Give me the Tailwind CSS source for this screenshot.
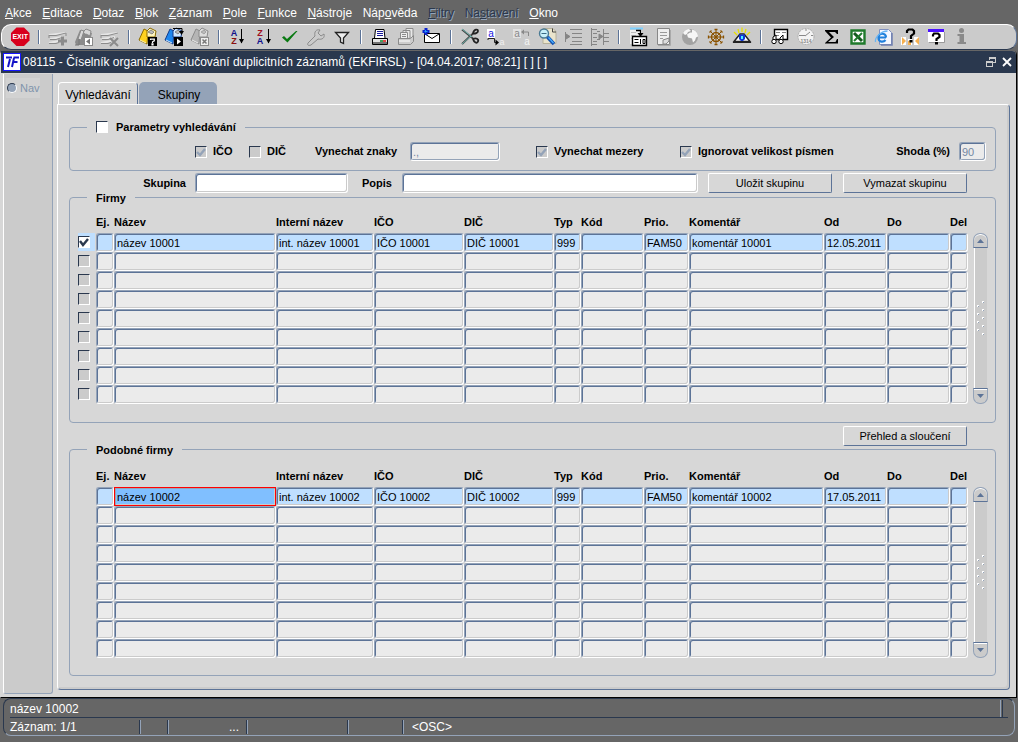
<!DOCTYPE html>
<html lang="cs">
<head>
<meta charset="utf-8">
<title>08115 - Číselník organizací</title>
<script src="https://cdn.jsdelivr.net/npm/@tailwindcss/browser@4"></script>
</head>
<body class="flex min-h-screen flex-col bg-[#666666] font-['Liberation_Sans',Arial,sans-serif] text-[11px] text-black">

<nav class="flex h-6 max-w-[558px] items-center justify-between pl-[5px] pt-[2px] text-[12px] text-white" aria-label="Hlavní nabídka">
  <a href="#"><u>A</u>kce</a>
  <a href="#"><u>E</u>ditace</a>
  <a href="#"><u>D</u>otaz</a>
  <a href="#"><u>B</u>lok</a>
  <a href="#"><u>Z</u>áznam</a>
  <a href="#"><u>P</u>ole</a>
  <a href="#"><u>F</u>unkce</a>
  <a href="#"><u>N</u>ástroje</a>
  <a href="#">Náp<u>o</u>věda</a>
  <a href="#" aria-disabled="true" class="text-[#2a384e] [text-shadow:1px_1px_0_#94a3b8]"><u>F</u>iltry</a>
  <a href="#" aria-disabled="true" class="text-[#2a384e] [text-shadow:1px_1px_0_#94a3b8]">Na<u>s</u>tavení</a>
  <a href="#"><u>O</u>kno</a>
</nav>

<div role="toolbar" aria-label="Nástroje" class="mx-px flex h-[26px] items-center rounded-[10px] border-b border-l border-r border-t border-b-[#2a384e] border-l-white border-r-[#5c7397] border-t-white bg-[#cbcbcb] pl-[5px] [&>button]:flex [&>button]:w-[26px] [&>button]:justify-center [&>i]:mx-[5px] [&>i]:h-[14px] [&>i]:w-[2px] [&>i]:border-l [&>i]:border-l-[#5c7397] [&>i]:bg-white [&_svg]:size-6">
  <button aria-label="Konec"><svg viewBox="0 0 24 24"><path d="M8.500 2.500h7.500L21.500 8v7.500L16 21H8.500L3 15.500V8Z" fill="#d8001d"/><text x="12.200" y="14.200" font-size="7" font-weight="bold" fill="#fff" text-anchor="middle">EXIT</text></svg></button>
  <i></i>
  <button aria-label="Vložit záznam"><svg viewBox="0 0 24 24" fill="none"><path d="M3 10 20 8M4 14l13-2M3 18l10-2" stroke="#e6e6e6" stroke-width="2"/><path d="M3 10.500h7L20 8M4 14.500h6l6-2M3 18.500h7l3-1M3 10v3M20 8v3" stroke="#8b8b8b"/><path d="M16.500 11.500v9M12 16h9" stroke="#8b8b8b" stroke-width="3"/></svg></button>
  <button aria-label="Duplikovat"><svg viewBox="0 0 24 24"><path d="m3 17 5-12 12 3-3 12H4Z" fill="#8b8b8b"/><path d="m6 14 3-9 3 1-3 9ZM11 7l3-3 5 2-1 5-4-2" fill="#d8d8d8" stroke="#8b8b8b"/><path d="M3 20h4v-6" stroke="#777" fill="none"/><rect x="12.500" y="12.500" width="8" height="8" fill="#fff" stroke="#8b8b8b"/><path d="M18 13.500v6l-4-3Z" fill="#777"/></svg></button>
  <button aria-label="Smazat záznam"><svg viewBox="0 0 24 24" fill="none"><path d="M3 10 20 8M4 14l13-2M3 18l10-2" stroke="#e6e6e6" stroke-width="2"/><path d="M3 10.500h7L20 8M4 14.500h6l6-2M3 18.500h7l3-1M3 10v3" stroke="#8b8b8b"/><path d="m12 13 8 8M20 13l-8 8" stroke="#8b8b8b" stroke-width="2"/></svg></button>
  <i></i>
  <button aria-label="Zadat dotaz"><svg viewBox="0 0 24 24"><path d="m3 15 5-11 4 2-1 13Z" fill="#ffd21e" stroke="#8a6a00"/><path d="m11 6 3-3 6 3-1 6h-8Z" fill="#fff6c0" stroke="#8a6a00"/><path d="m12 7 3-2 3 2-2 2Z" fill="#bbb" stroke="#555" stroke-width=".6"/><path d="m4 15 6 3" stroke="#fff6c0"/><rect x="12" y="12" width="9" height="9"/><path d="M14.500 15v-.8h3.800v1.600l-1.800 1V18M16 18.800h1v1.200h-1Z" fill="none" stroke="#fff" stroke-width="1.200"/></svg></button>
  <button aria-label="Provést dotaz"><svg viewBox="0 0 24 24"><path d="m3 15 5-11 4 2-1 13Z" fill="#1d86ee" stroke="#123a8a"/><path d="m11 6 3-3 6 3-1 6h-8Z" fill="#cfe8ff" stroke="#123a8a"/><path d="m13 7 3-2 2 2-2 2Z" fill="#bbb" stroke="#555" stroke-width=".6"/><path d="M11 3.500h9V7" stroke="#000" fill="none"/><path d="M17 6h5l-2.500 4Z"/><path d="m4 15 6 3" stroke="#cfe8ff"/><rect x="12" y="12" width="9" height="9"/><path d="M15 13.500v6l4-3Z" fill="#fff"/></svg></button>
  <button aria-label="Zrušit dotaz"><svg viewBox="0 0 24 24"><path d="m3 15 5-11 4 2-1 13Z" fill="#b5b5b5" stroke="#8b8b8b"/><path d="m11 6 3-3 6 3-1 6h-8Z" fill="#ddd" stroke="#8b8b8b"/><path d="m13 7 3-2 2 2-2 2Z" fill="#bbb" stroke="#888" stroke-width=".6"/><path d="m4 15 6 3" stroke="#eee"/><rect x="12.500" y="12.500" width="8" height="8" fill="#eee" stroke="#8b8b8b"/><path d="m14.500 14.500 4 4M18.500 14.500l-4 4" stroke="#777" stroke-width="1.500"/></svg></button>
  <i></i>
  <button aria-label="Seřadit vzestupně"><svg viewBox="0 0 24 24"><text x="8" y="11" font-size="9" font-weight="bold" fill="#10108a" text-anchor="middle">A</text><text x="8" y="19" font-size="9" font-weight="bold" fill="#8a1010" text-anchor="middle">Z</text><path d="M15.500 4v14" stroke="#000"/><path d="M13 14h5l-2.500 4.500Z"/></svg></button>
  <button aria-label="Seřadit sestupně"><svg viewBox="0 0 24 24"><text x="8" y="11" font-size="9" font-weight="bold" fill="#a01020" text-anchor="middle">Z</text><text x="8" y="19" font-size="9" font-weight="bold" fill="#10108a" text-anchor="middle">A</text><path d="M16.500 4v14" stroke="#000"/><path d="M14 14h5l-2.500 4.500Z"/></svg></button>
  <button aria-label="Potvrdit"><svg viewBox="0 0 24 24"><path d="M4 12.500 6 11l3 3 9-8h1.500L9.500 17.500Z" fill="#0a7a12"/></svg></button>
  <button aria-label="Nastavit"><svg viewBox="0 0 24 24" fill="none"><path d="m4 18 7-7c-1-4 1-7 5-6l-2 3 3 3 3-2c1 4-2 6-6 5l-7 6c-3 1-4 0-3-2Z" stroke="#8b8b8b"/></svg></button>
  <button aria-label="Filtr"><svg viewBox="0 0 24 24"><path d="M5.500 7.500h13l-5 5.500v5.500l-3-1.500v-4Z" fill="#eee" stroke="#222" stroke-width="1.300"/></svg></button>
  <i></i>
  <button aria-label="Tisk"><svg viewBox="0 0 24 24"><path d="M6.500 13 7.500 4.500h8.500l1 8.500" fill="#fff" stroke="#000"/><path d="M9 6.500h6M9 8.500h6M9 10.500h6" stroke="#1a1a9a"/><path d="M4.500 13.500h15v6h-15Z" fill="#e4e4e4" stroke="#000"/><path d="M5 18h14.500" stroke="#000"/><path d="M12 16h3" stroke="#0a8a2a" stroke-width="1.500"/><path d="M15 16h3" stroke="#e01010" stroke-width="1.500"/></svg></button>
  <button aria-label="Tisk kopií"><svg viewBox="0 0 24 24"><path d="M12 9V3.500h7V13M9 11V5.500h7V13" fill="#e8e8e8" stroke="#8b8b8b"/><path d="M6.500 13V7.500h7V13M8 9.500h4M8 11.500h4" fill="#eee" stroke="#8b8b8b"/><path d="M4.500 13.500h12l3-3v6l-3 3h-12Z" fill="#ccc" stroke="#8b8b8b"/><path d="M5 16h11" stroke="#fff"/></svg></button>
  <button aria-label="Odeslat poštou"><svg viewBox="0 0 24 24"><path d="M4.500 8.500h15v9h-15Z" fill="#fff" stroke="#000"/><path d="m5 9 7 4.500L19 9" fill="none" stroke="#000"/><path d="M6 3v7M2.500 6.500h7" stroke="#0a22d0" stroke-width="3"/><path d="M5.500 5v2.500M4.500 6.500h3" stroke="#22a0ff"/></svg></button>
  <i></i>
  <button aria-label="Vyjmout"><svg viewBox="0 0 24 24" fill="none"><path d="m4 4.500 11 9M4 19 15 8.500" stroke="#444" stroke-width="1.800"/><path d="m4 4 10 8M4 19l9-8" stroke="#7ad0c8" stroke-width=".8"/><path d="M15 8.500c1-5 5-4.500 5-2.500s-3 3-5 2.500ZM15 14c3-1.500 6 0 5 2.500s-4 1-5-2.500Z" stroke="#222" stroke-width="1.800"/></svg></button>
  <button aria-label="Kopírovat"><svg viewBox="0 0 24 24"><rect x="3" y="4" width="8" height="9" fill="#fff"/><text x="7" y="12" font-size="10" fill="#1414e0" text-anchor="middle">a</text><text x="18" y="20" font-size="9" fill="#f0f0f0" text-anchor="middle">a</text><path d="M4 15v-1.500h6.500v4H13" fill="none" stroke="#222"/><path d="m11.500 14.500 3.500 3-3.500 3Z"/></svg></button>
  <button aria-label="Vložit"><svg viewBox="0 0 24 24"><rect x="3" y="4" width="8" height="9" fill="#e2e2e2"/><text x="7" y="12" font-size="10" fill="#888" text-anchor="middle">a</text><text x="17" y="20" font-size="10" fill="#f4f4f4" text-anchor="middle">a</text><path d="M13 7h5.500v4" fill="none" stroke="#888"/><path d="M14 4.500 11 7l3 2.500Z" fill="#888"/></svg></button>
  <button aria-label="Hledat"><svg viewBox="0 0 24 24"><path d="M7 3.500h10l3 3v12H7Z" fill="#e9e4cc" stroke="#b5b09a"/><path d="M16.500 3.500V7H20" stroke="#444" fill="none"/><circle cx="8" cy="8.500" r="4.500" fill="#c8f0fa" stroke="#4a7a94" stroke-width="1.400"/><path d="M5.500 8.500h5" stroke="#3a6a84"/><path d="m11.500 12 6.500 7" stroke="#1552b0" stroke-width="3.500"/><path d="m12.500 12.500 5 5.500" stroke="#4ab0ff" stroke-width="1.200"/></svg></button>
  <button aria-label="Odsadit"><svg viewBox="0 0 24 24" stroke="#858585" fill="none"><path d="M8 4.500h12M10 8.500h10M10 12.500h10M10 16.500h10M8 19.500h12M3.500 7v10"/><path d="m4 9 4 2.500L4 14Z" fill="#858585"/></svg></button>
  <button aria-label="Rozdělit"><svg viewBox="0 0 24 24" stroke="#858585" fill="none"><path d="M3 4.500h6M5 8.500h4M5 12.500h4M5 16.500h4M3 19.500h6M3.500 3v18M15.500 4v16M16 8.500h5M16 12.500h5M16 16.500h5M9 6.500h3M9 14.500h3"/><path d="m11 9 4 2.500-4 2.500Z" fill="#858585"/></svg></button>
  <i></i>
  <button aria-label="Detail"><svg viewBox="0 0 24 24"><path d="M4 3.500h13" stroke="#7cd0ff" stroke-width="2"/><path d="M4 5h12v14H4Z" fill="#eee"/><path d="M5 7.500h5M5 10.500h5M5 13.500h3" stroke="#bbb"/><path d="M10 5.500h4.500V9" stroke="#000" fill="none" stroke-width="1.300"/><path d="M11.500 8h6l-3 4Z"/><path d="M6.500 11.500h14v9h-14Z" fill="#fff" stroke="#000" stroke-width="1.400"/><path d="M8.500 14.500h4M8.500 17.500h4M14.500 14v5M17 14.500h2v4h-2Z" stroke="#000" fill="none"/></svg></button>
  <button aria-label="Poznámka"><svg viewBox="0 0 24 24"><path d="M5.500 3.500h12v16h-12Z" fill="#eee" stroke="#888"/><path d="M18.500 5v15.500H6" stroke="#aaa" fill="none"/><path d="M8 7.500h7M8 10.500h7M8 13.500h3" stroke="#999"/><path d="M11 19v-4l6-2v3l-3 3Z" fill="#ddd" stroke="#888"/></svg></button>
  <button aria-label="Web"><svg viewBox="0 0 24 24"><circle cx="12" cy="12" r="8" fill="#a2a2a2"/><path d="M5 8c2-3 4-4 6-4l2 2-3 1-1 2-2 1ZM14 4.500c4 1 6 4 6 7l-2 1-1 3-2 2-1-4-4-1-1-3 3-2 2 0Z" fill="#f6f6f6"/></svg></button>
  <button aria-label="Kormidlo"><svg viewBox="0 0 24 24" fill="none" stroke="#8a5200"><circle cx="12" cy="12" r="4.500" stroke-width="1.500"/><circle cx="12" cy="12" r="1.200"/><path d="M12 4v16M4 12h16M7 7l10 10M17 7 7 17"/><path d="M10.500 4.500h3M10.500 19.500h3M4.500 10.500v3M19.500 10.500v3M5.500 7.500l2-2M16.500 5.500l2 2M5.500 16.500l2 2M16.500 18.500l2-2" stroke-width="1.300"/></svg></button>
  <button aria-label="Náhled"><svg viewBox="0 0 24 24"><path d="m4 7 3 3M8 4l1 4M12 2.500V7M16 4l-1 4M20 7l-3 3" stroke="#e8e000" stroke-width="1.300"/><path d="M4 16.500 10 9h4l6 7.500Z" fill="#fff" stroke="#222" stroke-width="1.500"/><path d="M3 17.500h18" stroke="#222"/><path d="M9 9.500h6v4.500l-2 2h-2l-2-2Z" fill="#1038d8"/><path d="M11 11h2v3h-2Z" fill="#4cf0ff"/></svg></button>
  <i></i>
  <button aria-label="Zobrazit seznam"><svg viewBox="0 0 24 24"><path d="M6.500 4.500h13v10h-13Z" fill="#fff" stroke="#000" stroke-width="1.400"/><path d="M8 7.500h4M8 10.500h3M14 7.500h4" stroke="#888"/><path d="M5 15v-3l3-2v4M12 15v-2l3-3v4" stroke="#000" fill="#fff"/><circle cx="6" cy="16.500" r="2.200" fill="#fff" stroke="#000"/><circle cx="13" cy="16.500" r="2.200" fill="#fff" stroke="#000"/></svg></button>
  <button aria-label="Čas"><svg viewBox="0 0 24 24"><circle cx="12" cy="11.500" r="8" fill="#f4f4f4" stroke="#aaa" stroke-dasharray="2 1"/><path d="m11 11 5-4M5 10.500h6M17 10.500h2M12 4v2" stroke="#888" fill="none"/><text x="12" y="17.500" font-size="5" font-weight="bold" fill="#888" text-anchor="middle">1314</text></svg></button>
  <button aria-label="Součet"><svg viewBox="0 0 24 24"><path d="M5 5h13v4h-1l-2-2H9l5 5-6 5h7.500l1.500-3h1v4.500H5V18l6-5.500L5 6Z"/></svg></button>
  <button aria-label="Excel"><svg viewBox="0 0 24 24"><path d="M5.500 5.500h13v13h-13Z" fill="#fff" stroke="#1f7a2c" stroke-width="2.400"/><path d="m8 8 8 8" stroke="#14591f" stroke-width="3"/><path d="m16 8-8 8" stroke="#1f7a2c" stroke-width="2"/></svg></button>
  <button aria-label="Prohlížeč"><svg viewBox="0 0 24 24"><path d="M7.500 4.500h9l3 3v12h-12Z" fill="#f4f7ff" stroke="#8090c0"/><path d="M20 8v12H9" fill="none" stroke="#7080b0" stroke-width="1.500"/><path d="M14 12.500H6.500M14 12.500c0-5-7.500-5-7.500 0s5 5 7 2.500" fill="none" stroke="#1f80dc" stroke-width="2.200"/><path d="M3.500 17c-1-5 6-11 12-11" fill="none" stroke="#68b4f4" stroke-width="1.300"/></svg></button>
  <button aria-label="Nápověda kontextu"><svg viewBox="0 0 24 24"><path d="M3 12h5v8H3ZM10 14h4v6h-4ZM16 12h5v8h-5Z" fill="#fff"/><path d="m4 12 4 4-4 4ZM10 16l3-1v5h-3ZM21 12l-4 4 4 4Z" fill="#f6b050"/><path d="M9 8V6l1.500-1.500h4L16 6v2.500L13 11v3" fill="none" stroke="#000" stroke-width="2.200"/><path d="M11.500 15h3v2.500h-3Z"/></svg></button>
  <button aria-label="Nápověda"><svg viewBox="0 0 24 24"><path d="M4 5h16v12H4Z" fill="#fff"/><path d="M4 5.500h16" stroke="#4a10ff" stroke-width="3"/><path d="M20.500 7v10.500H5" fill="none" stroke="#999"/><path d="M9 11.500V10l1-1.500h4l1.500 1.500v2L12.500 14v2" fill="none" stroke="#000" stroke-width="2.200"/><path d="M11 17h3v2.500h-3Z"/></svg></button>
  <button aria-label="Informace"><svg viewBox="0 0 24 24" fill="#8a8a8a"><circle cx="11.500" cy="5.500" r="2.500"/><path d="M7.500 9H14v8h2v2H7.500v-2h2v-6h-2Z"/></svg></button>
</div>

<main class="mr-px mt-px flex flex-1 flex-col rounded-t-[4px] border-b border-l border-r border-b-black border-l-[#d7d7d7] border-r-black bg-[#d7d7d7]">
  <header class="flex h-[22px] items-center rounded-tr-[4px] bg-[#2a384e] pl-[2px] pr-1 text-[12px] text-white">
    <svg class="mr-[2px] h-[18px] w-[18px]" viewBox="0 0 18 18" aria-hidden="true"><rect x=".5" y=".5" width="17" height="17" fill="#fff" stroke="#1414ff"/><path d="M3 4.500h6M7 6 5 14M11 5 9 14M10.500 4.500H16M10 9h4.500" stroke="#1414c8" stroke-width="2" fill="none"/></svg>
    <h1>08115 - Číselník organizací - slučování duplicitních záznamů (EKFIRSL) - [04.04.2017; 08:21] [ ] [ ]</h1>
    <button class="ml-auto mr-[6px]" aria-label="Obnovit"><svg class="h-[10px] w-[10px]" viewBox="0 0 10 10" fill="none" stroke="#ccc" shape-rendering="crispEdges"><path d="M3.500 3V.5h6v5H7M3 1.500h6"/><path d="M.5 4.500h6v5h-6ZM.5 5.500h6"/></svg></button>
    <button aria-label="Zavřít"><svg class="h-[10px] w-[10px]" viewBox="0 0 10 10" stroke="#fff" stroke-width="1.800"><path d="m1 1 8 8M9 1 1 9"/></svg></button>
  </header>

  <div class="flex flex-1 pb-[7px] pr-[6px]">
    <aside class="mb-[-4px] ml-[2px] mt-px w-[50px] shrink-0 rounded-b-[3px] border-b border-l border-r border-b-[#94a3b8] border-l-white border-r-[#94a3b8] bg-[#cbcbcb] pl-[2px] pt-1">
      <label class="flex h-[20px] w-[34px] items-center gap-[3px] bg-[#d2d2d2] pl-px text-[#8094ac]">
        <input type="radio" name="nav" disabled class="size-[10px] appearance-none rounded-full border border-b-white border-l-[#2a384e] border-r-white border-t-[#2a384e] bg-[#94a3b8]">Nav
      </label>
    </aside>

    <div class="ml-1 flex flex-1 flex-col pt-[9px]">
      <div role="tablist" class="flex h-[22px] gap-px pl-px text-[12px]">
        <button role="tab" aria-selected="true" class="w-[80px] rounded-t-[4px] border-l border-r border-t border-l-white border-r-[#5c7397] border-t-white bg-[#d7d7d7] pt-[2px]">Vyhledávání</button>
        <button role="tab" aria-selected="false" class="w-[78px] rounded-t-[5px] bg-[#94a3b8] pl-[2px] pt-[3px]">Skupiny</button>
      </div>

      <div role="tabpanel" class="flex-1 rounded-b-[4px] rounded-tr-[4px] border border-b-[#5c7397] border-l-white border-r-[#5c7397] border-t-white pb-[12px] pl-[11px] pr-[13px] pt-[14px] shadow-[inset_-2px_-2px_0_#cbcbcb]">

        <fieldset class="min-w-0 rounded-[4px] border border-[#94a3b8] pb-[9px] pl-[125px] pr-[9px]">
          <legend class="ml-[-108px] h-4 px-[9px] font-bold leading-4">
            <label class="flex items-center gap-2"><input type="checkbox" class="size-3 appearance-none border border-b-white border-l-[#2a384e] border-r-white border-t-[#2a384e] bg-white">Parametry vyhledávání</label>
          </legend>
          <div class="mt-[7px] flex h-[19px] items-center font-bold">
            <label class="flex w-[54px] items-center gap-[6px]"><span class="grid"><input type="checkbox" checked disabled class="col-start-1 row-start-1 size-3 appearance-none border border-b-white border-l-[#2a384e] border-r-white border-t-[#2a384e] bg-[#cbcbcb]"><svg class="col-start-1 row-start-1 size-3" viewBox="0 0 12 12" fill="none" stroke="#94a3b8" stroke-width="2.400" aria-hidden="true"><path d="m2 6 3 3 5-6"/></svg></span>IČO</label>
            <label class="flex w-[66px] items-center gap-[6px]"><input type="checkbox" disabled class="size-3 appearance-none border border-b-white border-l-[#2a384e] border-r-white border-t-[#2a384e] bg-[#cbcbcb]">DIČ</label>
            <label for="znaky" class="w-[95px]">Vynechat znaky</label>
            <input id="znaky" type="text" value=".," disabled class="h-[19px] w-[90px] rounded-[3px] border border-b-white border-l-[#94a3b8] border-r-white border-t-[#94a3b8] bg-[#ebebeb] px-[2px] font-normal text-[#7487a3] shadow-[inset_1px_1px_0_#5c7397,inset_-1px_-1px_0_#94a3b8]">
            <label class="ml-9 flex w-[144px] items-center gap-[6px]"><span class="grid"><input type="checkbox" checked disabled class="col-start-1 row-start-1 size-3 appearance-none border border-b-white border-l-[#2a384e] border-r-white border-t-[#2a384e] bg-[#cbcbcb]"><svg class="col-start-1 row-start-1 size-3" viewBox="0 0 12 12" fill="none" stroke="#94a3b8" stroke-width="2.400" aria-hidden="true"><path d="m2 6 3 3 5-6"/></svg></span>Vynechat mezery</label>
            <label class="flex items-center gap-[6px]"><span class="grid"><input type="checkbox" checked disabled class="col-start-1 row-start-1 size-3 appearance-none border border-b-white border-l-[#2a384e] border-r-white border-t-[#2a384e] bg-[#cbcbcb]"><svg class="col-start-1 row-start-1 size-3" viewBox="0 0 12 12" fill="none" stroke="#94a3b8" stroke-width="2.400" aria-hidden="true"><path d="m2 6 3 3 5-6"/></svg></span>Ignorovat velikost písmen</label>
            <label for="shoda" class="ml-auto mr-[9px]">Shoda (%)</label>
            <input id="shoda" type="text" value="90" disabled class="h-[19px] w-[27px] rounded-[3px] border border-b-white border-l-[#94a3b8] border-r-white border-t-[#94a3b8] bg-[#ebebeb] px-[2px] font-normal text-[#7487a3] shadow-[inset_1px_1px_0_#5c7397,inset_-1px_-1px_0_#94a3b8]">
          </div>
        </fieldset>

        <div class="mr-[29px] mt-[2px] flex h-[20px] items-center font-bold">
          <label for="skupina" class="w-[117px] text-right">Skupina</label>
          <input id="skupina" type="text" class="ml-[9px] h-[20px] w-[153px] rounded-[3px] border border-b-white border-l-[#94a3b8] border-r-white border-t-[#94a3b8] bg-white px-[2px] font-normal shadow-[inset_1px_1px_0_#5c7397,inset_-1px_-1px_0_#cbcbcb]">
          <label for="popis" class="ml-[14px] w-[40px]">Popis</label>
          <input id="popis" type="text" class="h-[20px] min-w-0 flex-1 rounded-[3px] border border-b-white border-l-[#94a3b8] border-r-white border-t-[#94a3b8] bg-white px-[2px] font-normal shadow-[inset_1px_1px_0_#5c7397,inset_-1px_-1px_0_#cbcbcb]">
          <button class="ml-[10px] h-5 w-[124px] rounded-[2px] border border-b-[#5c7397] border-l-white border-r-[#5c7397] border-t-white bg-[#d7d7d7] font-normal">Uložit skupinu</button>
          <button class="ml-[11px] h-5 w-[124px] rounded-[2px] border border-b-[#5c7397] border-l-white border-r-[#5c7397] border-t-white bg-[#d7d7d7] font-normal">Vymazat skupinu</button>
        </div>

        <fieldset class="-mt-[2px] min-w-0 rounded-[4px] border border-[#94a3b8] pb-[18px] pl-2 pr-[7px]">
          <legend class="ml-[9px] h-3 px-[9px] font-bold leading-[14px]">Firmy</legend>
          <div data-grid="0" class="flex"></div>
        </fieldset>

        <div class="mr-[29px] mt-[3px] flex justify-end">
          <button class="h-5 w-[124px] rounded-[2px] border border-b-[#5c7397] border-l-white border-r-[#5c7397] border-t-white bg-[#d7d7d7]">Přehled a sloučení</button>
        </div>

        <fieldset class="-mt-[3px] min-w-0 rounded-[4px] border border-[#94a3b8] pb-[17px] pl-2 pr-[7px] pt-[2px]">
          <legend class="ml-[9px] h-3 px-[9px] font-bold leading-[14px]">Podobné firmy</legend>
          <div data-grid="1" class="flex"></div>
        </fieldset>
      </div>
    </div>
  </div>
</main>

<footer class="mb-[6px] ml-[3px] mr-[3px] rounded-[8px] border border-b-[#94a3b8] border-l-[#2a384e] border-r-[#94a3b8] border-t-[#2a384e] px-[6px] text-[12px] text-white">
  <div class="flex h-[19px] items-center border-b border-[#2a384e]">
    <span class="flex-1 pt-px">název 10002</span>
    <span class="mr-[5px] h-[17px] w-[3px] border-l border-r border-l-[#94a3b8] border-r-[#2a384e]"></span>
  </div>
  <div class="flex h-[17px] items-center [&>span]:h-[14px] [&>span]:border-r [&>span]:border-[#94a3b8] [&>span]:leading-[15px] [&>span]:shadow-[inset_-1px_0_0_#2a384e]">
    <span class="w-[131px]">Záznam: 1/1</span>
    <span class="w-7"></span>
    <span class="w-[79px] pr-[8px] text-right">...</span>
    <span class="w-[101px]"></span>
    <span class="w-[55px]"></span>
    <p class="h-[14px] pl-[8px] leading-[15px]">&lt;OSC&gt;</p>
  </div>
</footer>

<script>
  const columns = [
    ['Ej.', 18], ['Název', 162], ['Interní název', 98], ['IČO', 90], ['DIČ', 90], ['Typ', 27], ['Kód', 63],
    ['Prio.', 45], ['Komentář', 135], ['Od', 63], ['Do', 63], ['Del', 18]
  ];
  const records = [
    ['', 'název 10001', 'int. název 10001', 'IČO 10001', 'DIČ 10001', '999', '', 'FAM50', 'komentář 10001', '12.05.2011', '', ''],
    ['', 'název 10002', 'int. název 10002', 'IČO 10002', 'DIČ 10002', '999', '', 'FAM50', 'komentář 10002', '17.05.2011', '', '']
  ];
  const field = 'block h-[19px] w-full rounded-[3px] border px-[2px] border-b-white border-l-[#94a3b8] border-r-white border-t-[#94a3b8] shadow-[inset_1px_1px_0_#5c7397,inset_-1px_-1px_0_#cbcbcb] ';
  const active = 'block h-[19px] w-full border border-[#ff0000] px-[2px] bg-[#80bfff] shadow-[inset_1px_1px_0_#94a3b8,inset_-1px_-1px_0_#cbcbcb] outline-none';
  const box = 'col-start-1 row-start-1 size-3 appearance-none border border-b-white border-l-[#2a384e] border-r-white border-t-[#2a384e] ';

  document.querySelectorAll('[data-grid]').forEach(host => {
    const g = +host.dataset.grid;
    const head = columns.map(c => `<th scope="col" class="p-0 text-left font-bold whitespace-nowrap">${c[0]}</th>`).join('');
    let body = '';
    for (let r = 0; r < 9; r++) {
      const tick = g ? '' : `<span class="${r ? 'grid h-[17px] w-[17px] content-center' : 'grid h-[18px] w-[17px] content-center bg-[#bfdfff]'}"><input type="checkbox" aria-label="Vybrat řádek ${r + 1}" ${r ? 'disabled' : 'checked'} class="${box + (r ? 'bg-[#cbcbcb]' : 'bg-white')}">${r ? '' : '<svg class="pointer-events-none col-start-1 row-start-1 size-3" viewBox="0 0 12 12" fill="none" stroke="#2a384e" stroke-width="2.400"><path d="m2 5 3 4 5-6"/></svg>'}</span>`;
      const cells = columns.map((c, i) => {
        const cls = g && !r && i === 1 ? active : field + (r ? 'bg-[#ebebeb]' : 'bg-[#bfdfff]');
        return `<td class="p-0"><input type="text" aria-label="${c[0]} ${r + 1}" value="${r ? '' : records[g][i]}" class="${cls}"></td>`;
      }).join('');
      body += `<tr class="h-[19px]"><td class="p-0 align-top">${tick}</td>${cells}</tr>`;
    }
    host.innerHTML = `
      <table class="min-w-0 flex-1 table-fixed border-collapse">
        <colgroup><col style="width:18px">${columns.map(c => `<col style="width:${c[1]}px">`).join('')}</colgroup>
        <thead><tr class="h-[30px] [&>th]:pt-2"><td class="p-0"></td>${head}</tr></thead>
        <tbody>${body}</tbody>
      </table>
      <div class="ml-[5px] mt-[30px] flex w-[15px] flex-col items-center">
        <button aria-label="Nahoru" class="flex h-[15px] w-[15px] items-center justify-center rounded-t-[7px] border border-[#94a3b8] border-b-[#5c7397] bg-[#cbcbcb] shadow-[inset_0_1px_0_white]"><svg class="h-[4px] w-[7px]" viewBox="0 0 7 4" fill="#5c7397"><path d="M0 4 3.500 0 7 4Z"/></svg></button>
        <div class="flex w-[13px] flex-1 items-center justify-center border-l border-white bg-[#cbcbcb]">
          <svg class="h-[36px] w-[8px]" viewBox="0 0 8 36" shape-rendering="crispEdges"><path d="M1 5v30M6 1v34" stroke="#fff" stroke-width="2" stroke-dasharray="2 6"/><path d="M1.500 6v30M6.500 2v34" stroke="#94a3b8" stroke-dasharray="1 7"/></svg>
        </div>
        <button aria-label="Dolů" class="flex h-[16px] w-[15px] items-center justify-center rounded-b-[7px] border border-[#94a3b8] border-t-[#5c7397] bg-[#cbcbcb] shadow-[inset_0_1px_0_white]"><svg class="h-[4px] w-[7px]" viewBox="0 0 7 4" fill="#5c7397"><path d="M0 0 3.500 4 7 0Z"/></svg></button>
      </div>`;
  });
</script>
</body>
</html>
